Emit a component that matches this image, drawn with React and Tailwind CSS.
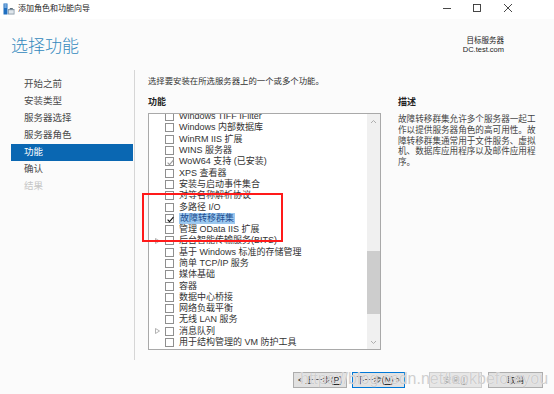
import React from 'react';

const FONT = "font-['Liberation_Sans','Noto_Sans_CJK_SC',sans-serif]";

const navItems = [
    { label: '开始之前' },
    { label: '安装类型' },
    { label: '服务器选择' },
    { label: '服务器角色' },
    { label: '功能', active: true },
    { label: '确认' },
    { label: '结果', disabled: true },
];

const features = [
    { label: 'Windows TIFF IFilter' },
    { label: 'Windows 内部数据库' },
    { label: 'WinRM IIS 扩展' },
    { label: 'WINS 服务器' },
    { label: 'WoW64 支持 (已安装)', checked: 'gray' },
    { label: 'XPS 查看器' },
    { label: '安装与启动事件集合' },
    { label: '对等名称解析协议' },
    { label: '多路径 I/O' },
    { label: '故障转移群集', checked: 'black', selected: true },
    { label: '管理 OData IIS 扩展' },
    { label: '后台智能传输服务(BITS)', expand: true },
    { label: '基于 Windows 标准的存储管理' },
    { label: '简单 TCP/IP 服务' },
    { label: '媒体基础' },
    { label: '容器' },
    { label: '数据中心桥接' },
    { label: '网络负载平衡' },
    { label: '无线 LAN 服务' },
    { label: '消息队列', expand: true },
    { label: '用于结构管理的 VM 防护工具' },
];

/* ── Small drawings ─────────────────────────────────── */
const AppIcon = () => (
    <svg width="12" height="12" viewBox="0 0 12 12">
        <rect x="0.5" y="0.5" width="4" height="11" fill="#1f6fc0" />
        <rect x="1.3" y="1.5" width="2.4" height="1" fill="#cfe3f7" />
        <rect x="1.3" y="3.5" width="2.4" height="1" fill="#cfe3f7" />
        <rect x="5" y="6" width="6.5" height="5.5" fill="#8a9aa8" />
        <rect x="5.8" y="7.2" width="4.9" height="3.4" fill="#dfe6ec" />
        <rect x="6.8" y="5" width="3" height="1.2" fill="#5d6e7c" />
    </svg>
);

const Check = ({ color }) => (
    <svg width="9" height="9" viewBox="0 0 9 9" className="absolute left-0 top-0">
        <polyline points="1.6,4.6 3.5,6.6 7.4,2.2" fill="none" stroke={color} strokeWidth="1.1" />
    </svg>
);

const Expander = () => (
    <svg width="5" height="6" viewBox="0 0 5 6">
        <polygon points="0.5,0.5 4.5,3 0.5,5.5" fill="none" stroke="#a0a0a0" strokeWidth="0.8" />
    </svg>
);

function FeatureRow({ item }) {
    return (
        <div className="flex items-center h-[11.3px] shrink-0">
            <div className="w-[16px] flex justify-end pr-[5px]">
                {item.expand && <Expander />}
            </div>
            <div className="relative w-[9px] h-[9px] border border-[#8f8f8f] bg-white shrink-0">
                {item.checked && <Check color={item.checked === 'gray' ? '#9a9a9a' : '#111'} />}
            </div>
            <span
                className={`ml-[5px] text-[9px] leading-[11px] whitespace-nowrap ${
                    item.selected ? 'bg-[#9cc8ef] text-[#1d4e8f] px-[1px]' : 'text-[#333]'
                }`}
            >
                {item.label}
            </span>
        </div>
    );
}

export default function App() {
    return (
        <div className={`relative w-[554px] h-[394px] overflow-hidden bg-[#fbfbfb] ${FONT}`}>
            {/* Title bar */}
            <div className="h-[19px] bg-white flex items-center">
                <div className="ml-[3px] mt-[-2px]"><AppIcon /></div>
                <span className="ml-[3px] mt-[-2px] text-[8px] leading-[10px] text-[#222]">添加角色和功能向导</span>
                <div className="ml-auto flex items-center mt-[-3px]">
                    <svg width="10" height="10" viewBox="0 0 10 10" className="mr-[20px]">
                        <line x1="1" y1="5.5" x2="9" y2="5.5" stroke="#333" strokeWidth="0.9" />
                    </svg>
                    <svg width="10" height="10" viewBox="0 0 10 10" className="mr-[21px]">
                        <rect x="1.5" y="1.5" width="7" height="7" fill="none" stroke="#333" strokeWidth="0.9" />
                    </svg>
                    <svg width="10" height="10" viewBox="0 0 10 10" className="mr-[41px]">
                        <line x1="1" y1="1" x2="9" y2="9" stroke="#333" strokeWidth="0.9" />
                        <line x1="9" y1="1" x2="1" y2="9" stroke="#333" strokeWidth="0.9" />
                    </svg>
                </div>
            </div>

            {/* Header */}
            <div className="h-[51px] flex items-start justify-between">
                <h1 className="ml-[11px] mt-[17px] text-[17px] leading-[22px] font-light text-[#3389bd]">选择功能</h1>
                <div className="mr-[50px] mt-[17px] flex flex-col items-end text-[7.5px] leading-[9px] text-[#222]">
                    <span>目标服务器</span>
                    <span>DC.test.com</span>
                </div>
            </div>

            {/* Body */}
            <div className="flex h-[290px]">
                <nav className="w-[135px] border-r border-[#d6d6d6] pt-[6px] flex flex-col">
                    {navItems.map(item => (
                        <div
                            key={item.label}
                            className={`ml-[11px] w-[122px] h-[17px] pl-[13px] flex items-center text-[9.5px] ${
                                item.active
                                    ? 'bg-[#0a67b2] text-white'
                                    : item.disabled
                                    ? 'text-[#c6c6c6]'
                                    : 'text-[#4a4a4a]'
                            }`}
                        >
                            {item.label}
                        </div>
                    ))}
                </nav>

                <div className="flex pl-[13px] pt-[5px]">
                    <div className="flex flex-col w-[233px]">
                        <p className="text-[8.4px] leading-[12px] text-[#333] whitespace-nowrap">
                            选择要安装在所选服务器上的一个或多个功能。
                        </p>
                        <p className="mt-[9px] text-[9px] leading-[12px] font-bold text-[#222]">功能</p>

                        {/* Feature list */}
                        <div className="mt-[5px] h-[237px] border border-[#a9a9a9] bg-white flex overflow-hidden">
                            <div className="flex-1 overflow-hidden">
                                <div className="mt-[-3px] flex flex-col">
                                    {features.map(item => (
                                        <FeatureRow key={item.label} item={item} />
                                    ))}
                                </div>
                            </div>
                            <div className="w-[13px] bg-[#f0f0f0] flex flex-col">
                                <div className="h-[14px] flex items-center justify-center">
                                    <svg width="7" height="5" viewBox="0 0 7 5">
                                        <polyline points="1,4 3.5,1.5 6,4" fill="none" stroke="#a6a6a6" strokeWidth="0.9" />
                                    </svg>
                                </div>
                                <div className="h-[123px]" />
                                <div className="h-[63px] bg-[#cdcdcd]" />
                                <div className="flex-1" />
                                <div className="h-[14px] flex items-center justify-center">
                                    <svg width="7" height="5" viewBox="0 0 7 5">
                                        <polyline points="1,1 3.5,3.5 6,1" fill="none" stroke="#a6a6a6" strokeWidth="0.9" />
                                    </svg>
                                </div>
                            </div>
                        </div>
                    </div>

                    {/* Description */}
                    <div className="ml-[17px] w-[145px] flex flex-col">
                        <p className="mt-[21px] text-[9px] leading-[12px] font-bold text-[#222]">描述</p>
                        <p className="mt-[6px] text-[8.6px] leading-[10.8px] text-[#444]">
                            故障转移群集允许多个服务器一起工<br />
                            作以提供服务器角色的高可用性。故<br />
                            障转移群集通常用于文件服务、虚拟<br />
                            机、数据库应用程序以及邮件应用程<br />
                            序。
                        </p>
                    </div>
                </div>
            </div>

            {/* Footer buttons */}
            <div className="flex items-center justify-end pr-[11px] mt-[12px] text-[8.5px]">
                <button className="w-[54px] h-[16px] bg-[#e1e1e1] border border-[#adadad] text-[#222] leading-none">
                    &lt; 上一步(<u>P</u>)
                </button>
                <button className="ml-[5px] w-[53px] h-[16px] bg-[#e1e1e1] border border-[#0078d7] text-[#222] leading-none">
                    下一步(<u>N</u>) &gt;
                </button>
                <button className="ml-[24px] w-[53px] h-[16px] bg-[#e6e6e6] border border-[#cdcdcd] text-[#a0a0a0] leading-none">
                    安装(<u>I</u>)
                </button>
                <button className="ml-[6px] w-[55px] h-[16px] bg-[#e1e1e1] border border-[#adadad] text-[#222] leading-none">
                    取消
                </button>
            </div>

            {/* Red annotation box */}
            <div className="absolute left-[142px] top-[193px] w-[141px] h-[49px] border-2 border-[#ff1a1a]" />

            {/* Watermark */}
            <div className="absolute left-[300px] top-[369px] text-[16px] leading-[19px] text-[#cfcfcf] whitespace-nowrap pointer-events-none [text-shadow:0_0_1px_#ffffff]">
                https://blog.csdn.net/lookbeforeyou
            </div>
        </div>
    );
}
